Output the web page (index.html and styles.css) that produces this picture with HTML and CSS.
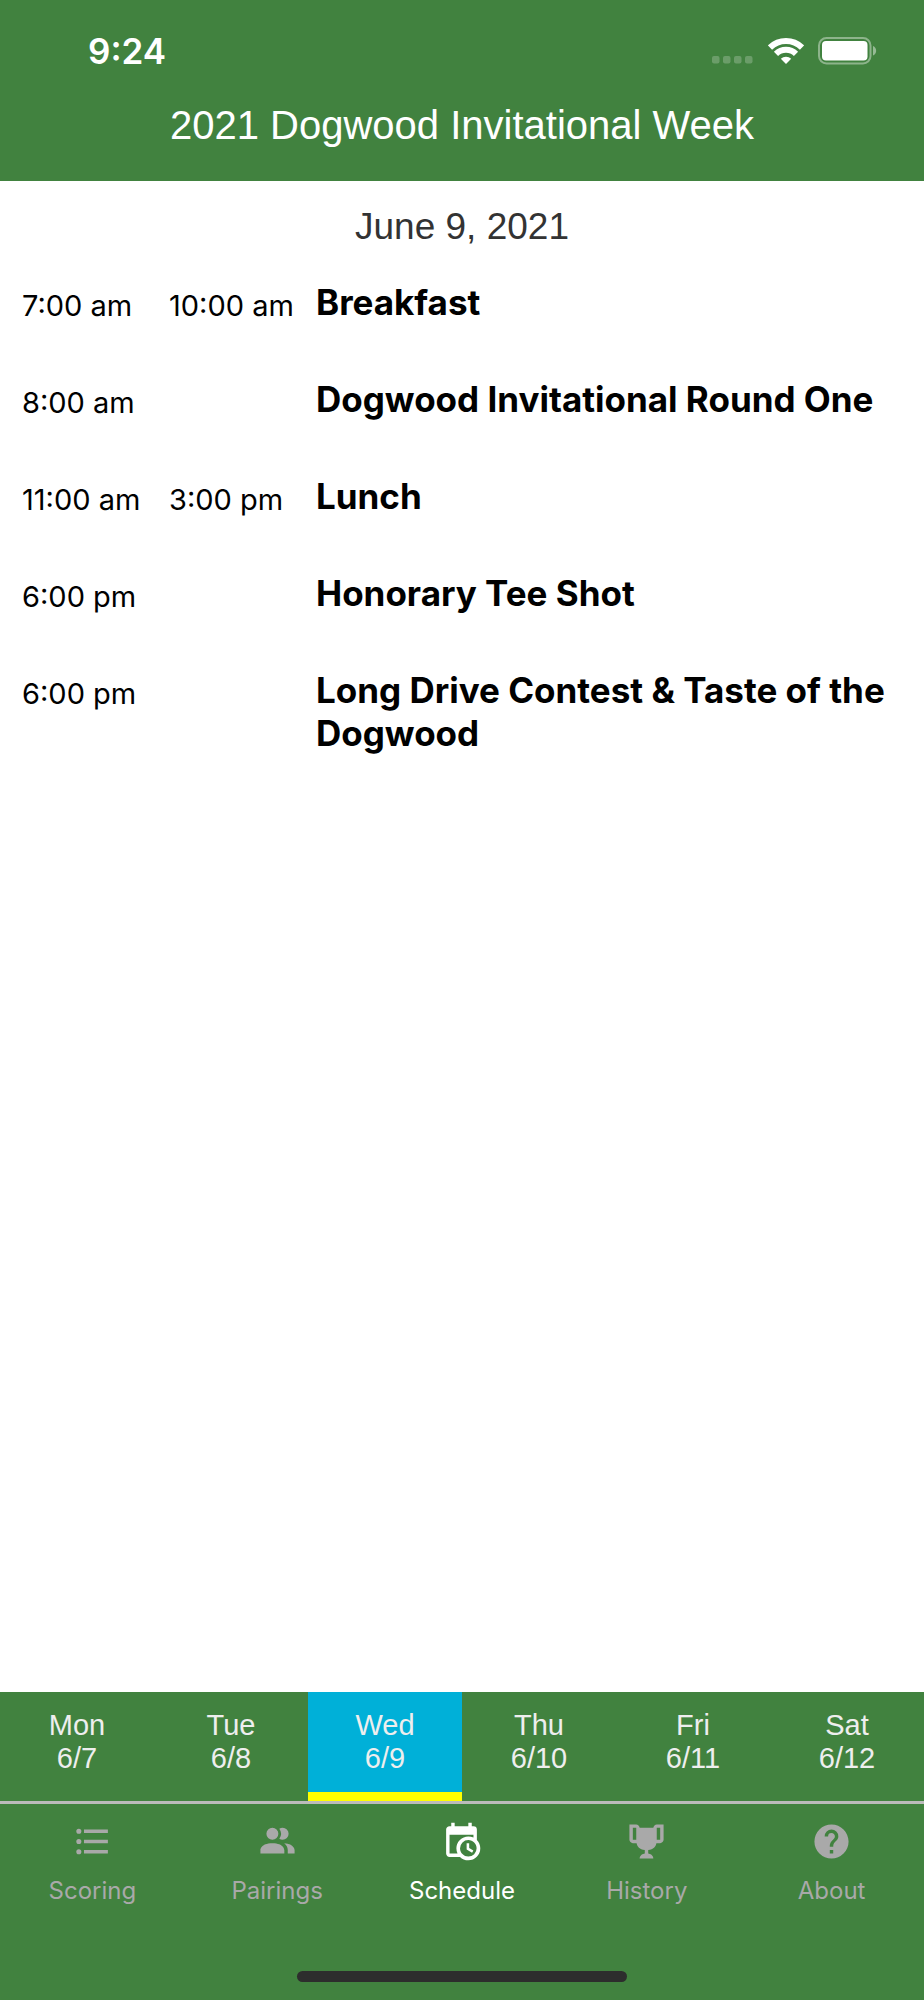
FILE: index.html
```html
<!DOCTYPE html>
<html lang="en">
<head>
  <meta charset="UTF-8">
  <meta name="viewport" content="width=device-width, initial-scale=1">
  <title>2021 Dogwood Invitational Week</title>
  <link rel="stylesheet" href="styles.css">
</head>
<body>
  <!-- Header -->
  <header class="header">
    <div class="status-bar">
      <span class="clock">9:24</span>
      <div class="indicators">
        <svg class="signal" width="42" height="26" viewBox="0 0 42 26" aria-hidden="true">
          <rect x="0" y="18" width="7.5" height="7.5" rx="2"/>
          <rect x="11" y="18" width="7.5" height="7.5" rx="2"/>
          <rect x="22" y="18" width="7.5" height="7.5" rx="2"/>
          <rect x="33" y="18" width="7.5" height="7.5" rx="2"/>
        </svg>
        <svg class="wifi" width="36" height="26" viewBox="0 0 36 26" aria-hidden="true">
          <path class="arc" d="M2 9.5A23 23 0 0 1 34 9.5"/>
          <path class="arc" d="M8 15.8A14.4 14.4 0 0 1 28 15.8"/>
          <path d="M18 26L12.8 20.8A7.5 7.5 0 0 1 23.2 20.8Z"/>
        </svg>
        <svg class="battery" width="60" height="28" viewBox="0 0 60 28" aria-hidden="true">
          <rect class="shell" x="1" y="1" width="51.5" height="25.5" rx="7.5"/>
          <rect x="4" y="4" width="45.5" height="19.5" rx="4"/>
          <path class="tip" d="M55 9C59.2 10.5 59.2 17 55 18.5Z"/>
        </svg>
      </div>
    </div>
    <h1 class="title">2021 Dogwood Invitational Week</h1>
  </header>

  <!-- Events for the selected day -->
  <main class="schedule">
    <h2 class="date">June 9, 2021</h2>
    <table class="events">
      <tbody>
        <tr>
          <td class="time">7:00 am</td>
          <td class="time">10:00 am</td>
          <th class="event" scope="row">Breakfast</th>
        </tr>
        <tr>
          <td class="time">8:00 am</td>
          <td class="time"></td>
          <th class="event" scope="row">Dogwood Invitational Round One</th>
        </tr>
        <tr>
          <td class="time">11:00 am</td>
          <td class="time">3:00 pm</td>
          <th class="event" scope="row">Lunch</th>
        </tr>
        <tr>
          <td class="time">6:00 pm</td>
          <td class="time"></td>
          <th class="event" scope="row">Honorary Tee Shot</th>
        </tr>
        <tr>
          <td class="time">6:00 pm</td>
          <td class="time"></td>
          <th class="event" scope="row">Long Drive Contest &amp; Taste of the Dogwood</th>
        </tr>
      </tbody>
    </table>
  </main>

  <!-- Day picker -->
  <div class="days">
    <button class="day" type="button">Mon<br>6/7</button>
    <button class="day" type="button">Tue<br>6/8</button>
    <button class="day selected" type="button" aria-pressed="true">Wed<br>6/9</button>
    <button class="day" type="button">Thu<br>6/10</button>
    <button class="day" type="button">Fri<br>6/11</button>
    <button class="day" type="button">Sat<br>6/12</button>
  </div>

  <!-- Bottom tabs -->
  <footer class="footer">
    <nav class="tabs">
      <a class="tab" href="#scoring">
        <svg class="icon" viewBox="0 0 24 24" aria-hidden="true"><path d="M7 5H21V7H7V5M7 13V11H21V13H7M4 4.5A1.5 1.5 0 0 1 5.5 6A1.5 1.5 0 0 1 4 7.5A1.5 1.5 0 0 1 2.5 6A1.5 1.5 0 0 1 4 4.5M4 10.5A1.5 1.5 0 0 1 5.5 12A1.5 1.5 0 0 1 4 13.5A1.5 1.5 0 0 1 2.5 12A1.5 1.5 0 0 1 4 10.5M7 19V17H21V19H7M4 16.5A1.5 1.5 0 0 1 5.5 18A1.5 1.5 0 0 1 4 19.5A1.5 1.5 0 0 1 2.5 18A1.5 1.5 0 0 1 4 16.5Z"/></svg>
        Scoring
      </a>
      <a class="tab" href="#pairings">
        <svg class="icon" viewBox="0 0 24 24" aria-hidden="true"><path d="M16 17V19H2V17S2 13 9 13 16 17 16 17M12.5 7.5A3.5 3.5 0 1 0 9 11A3.5 3.5 0 0 0 12.5 7.5M15.94 13A5.32 5.32 0 0 1 18 17V19H22V17S22 13.37 15.94 13M15 4A3.39 3.39 0 0 0 13.07 4.59A5 5 0 0 1 13.07 10.41A3.39 3.39 0 0 0 15 11A3.5 3.5 0 0 0 15 4Z"/></svg>
        Pairings
      </a>
      <a class="tab active" href="#schedule" aria-current="page">
        <svg class="icon" viewBox="0 0 24 24" aria-hidden="true"><path d="M15 13H16.5V15.82L18.94 17.23L18.19 18.53L15 16.69V13M19 8H5V19H9.67C9.24 18.09 9 17.07 9 16A7 7 0 0 1 16 9C17.07 9 18.09 9.24 19 9.67V8M5 21C3.89 21 3 20.1 3 19V5C3 3.89 3.89 3 5 3H6V1H8V3H16V1H18V3H19A2 2 0 0 1 21 5V11.1C22.24 12.36 23 14.09 23 16A7 7 0 0 1 16 23C14.09 23 12.36 22.24 11.1 21H5M16 11.15A4.85 4.85 0 0 0 11.15 16C11.15 18.68 13.32 20.85 16 20.85A4.85 4.85 0 0 0 20.85 16C20.85 13.32 18.68 11.15 16 11.15Z"/></svg>
        Schedule
      </a>
      <a class="tab" href="#history">
        <svg class="icon" viewBox="0 0 24 24" aria-hidden="true"><path d="M20.2 2H19.5H18C17.1 2 16 3 16 4H8C8 3 6.9 2 6 2H4.5H3.8H2V11C2 12 3 13 4 13H6.2C6.6 15 7.9 16.7 11 17V19.08C8 19.54 8 22 8 22H16C16 22 16 19.54 13 19.08V17C16.1 16.7 17.4 15 17.8 13H20C21 13 22 12 22 11V2H20.2M4 11V4H6V6V11C5.1 11 4.3 11 4 11M20 11C19.7 11 18.9 11 18 11V6V4H20V11Z"/></svg>
        History
      </a>
      <a class="tab" href="#about">
        <svg class="icon" viewBox="0 0 24 24" aria-hidden="true"><path d="M15.07 11.25L14.17 12.17C13.45 12.89 13 13.5 13 15H11V14.5C11 13.39 11.45 12.39 12.17 11.67L13.41 10.41C13.78 10.05 14 9.55 14 9C14 7.89 13.1 7 12 7A2 2 0 0 0 10 9H8A4 4 0 0 1 12 5A4 4 0 0 1 16 9C16 9.88 15.64 10.67 15.07 11.25M13 19H11V17H13M12 2A10 10 0 0 0 2 12A10 10 0 0 0 12 22A10 10 0 0 0 22 12C22 6.47 17.5 2 12 2Z"/></svg>
        About
      </a>
    </nav>
    <div class="home-indicator"></div>
  </footer>
</body>
</html>
```
FILE: styles.css
```css
* {
  box-sizing: border-box;
}
body {
  margin: 0;
  min-height: 100vh;
  display: flex;
  flex-direction: column;
  background: #fff;
  color: #000;
  font-family: Inter, "Liberation Sans", sans-serif;
}

/* Header */
.header {
  background: #41823f;
  color: #fff;
  padding-bottom: 32px;
}
.status-bar {
  display: flex;
  justify-content: space-between;
  align-items: center;
  height: 101px;
  padding: 0 46px 0 88px;
}
.clock {
  font-size: 35px;
  font-weight: 600;
}
.indicators {
  display: flex;
  align-items: center;
  gap: 14px;
  fill: #fff;
}
.signal {
  opacity: 0.22;
}
.wifi .arc {
  fill: none;
  stroke: #fff;
  stroke-width: 6;
}
.battery .shell {
  fill: none;
  stroke: #fff;
  stroke-width: 2;
  opacity: 0.4;
}
.battery .tip {
  opacity: 0.45;
}
.title,
.date {
  margin: 0;
  font-family: "Liberation Sans", Arial, sans-serif;
  font-weight: 400;
  text-align: center;
}
.title {
  font-size: 40px;
  line-height: 48px;
}

/* Events */
.schedule {
  flex: 1;
  padding: 24px 22px 0;
}
.date {
  font-size: 37px;
  line-height: 44px;
  color: #333;
}
.events {
  width: 100%;
  margin-top: 32px;
  table-layout: fixed;
  border-collapse: collapse;
}
.events th,
.events td {
  padding: 0;
  text-align: left;
  vertical-align: top;
}
.events .time {
  width: 147px;
  font-size: 29px;
  line-height: 50px;
  white-space: nowrap;
}
.events .event {
  padding-bottom: 54px;
  font-size: 35px;
  font-weight: 700;
  line-height: 43px;
}

/* Day picker */
.days {
  display: grid;
  grid-template-columns: repeat(6, 1fr);
  background: #41823f;
}
.day {
  height: 109px;
  padding: 0;
  border: none;
  border-bottom: 9px solid transparent;
  background: none;
  color: #eee;
  font-family: "Liberation Sans", Arial, sans-serif;
  font-size: 29px;
  line-height: 33px;
  cursor: pointer;
}
.day.selected {
  background: #00b0d8;
  border-bottom-color: #ff0;
}

/* Bottom tabs */
.footer {
  border-top: 3px solid #bbb;
  background: #41823f;
}
.tabs {
  display: grid;
  grid-template-columns: repeat(5, 1fr);
  padding: 17px 0 63px;
}
.tab {
  display: flex;
  flex-direction: column;
  align-items: center;
  gap: 12px;
  color: #a9a9a9;
  font-size: 24px;
  line-height: 34px;
  text-decoration: none;
}
.tab.active {
  color: #fff;
}
.icon {
  width: 41px;
  height: 41px;
  fill: currentColor;
}
.home-indicator {
  width: 330px;
  height: 11px;
  margin: 0 auto 18px;
  border-radius: 6px;
  background: #2d2d2d;
}
```
